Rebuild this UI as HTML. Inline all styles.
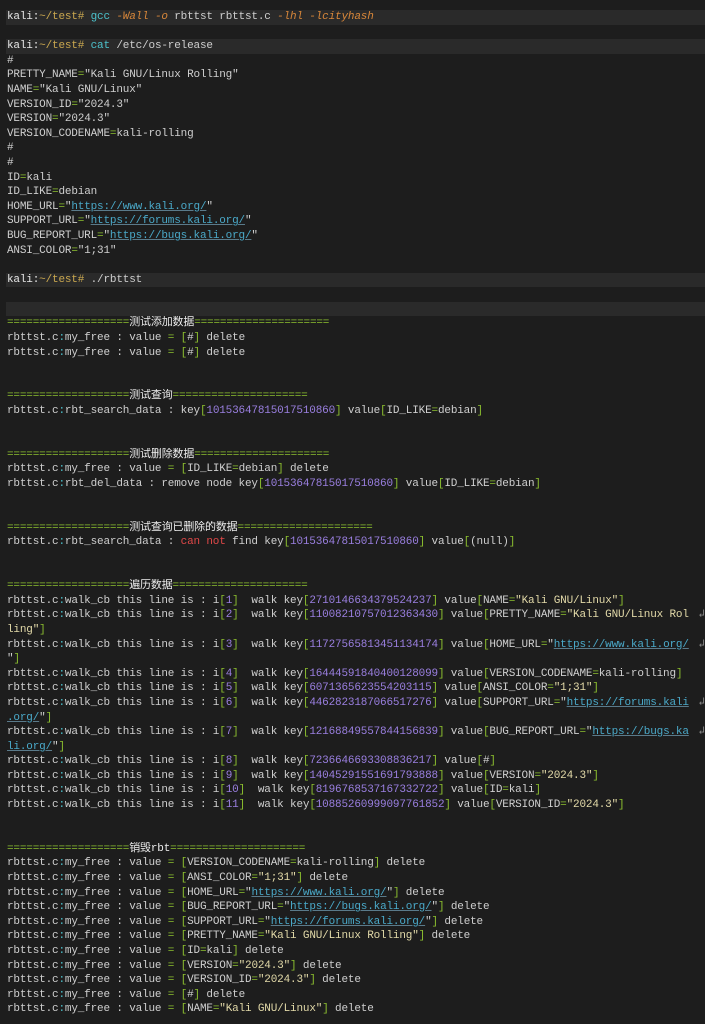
<!DOCTYPE html>
<html><head><meta charset="utf-8"><style>
html,body{margin:0;padding:0;background:#1d1d1d;width:705px;height:1024px;overflow:hidden}
#t{position:absolute;top:10px;left:0;width:705px;font-family:"Liberation Mono","Noto Sans CJK SC",monospace;font-size:11px;letter-spacing:-0.17px;line-height:14.6px;color:#cfcfcf}
.l{white-space:pre;height:14.6px;padding-left:7px;overflow:hidden;position:relative}
.b{background:#2a2a2a;margin-left:6px;padding-left:1px}
.p{color:#e6e6e6}.t{color:#c9a74f}.c{color:#4cc2cc}.f{color:#d8873a;font-style:italic}
.g{color:#8cbf2f}.n{color:#9a7fe0}.u{color:#4aa9c9;text-decoration:underline;text-decoration-color:#5a7a8a}
.r{color:#e04848}.w{color:#ececec}.k{color:#4cc2cc}.s{color:#e2d9a8}
.m{position:absolute;right:0;top:0;color:#888;background:#1d1d1d;padding-left:1px}
</style></head><body><div id="t">
<div class="l b"><span class="p">kali:</span><span class="t">~/test#</span> <span class="c">gcc</span> <span class="f">-Wall -o</span> rbttst rbttst.c <span class="f">-lhl -lcityhash</span></div>
<div class="l"></div>
<div class="l b"><span class="p">kali:</span><span class="t">~/test#</span> <span class="c">cat</span> /etc/os-release</div>
<div class="l">#</div>
<div class="l">PRETTY_NAME<span class="g">=</span>"Kali GNU/Linux Rolling"</div>
<div class="l">NAME<span class="g">=</span>"Kali GNU/Linux"</div>
<div class="l">VERSION_ID<span class="g">=</span>"2024.3"</div>
<div class="l">VERSION<span class="g">=</span>"2024.3"</div>
<div class="l">VERSION_CODENAME<span class="g">=</span>kali-rolling</div>
<div class="l">#</div>
<div class="l">#</div>
<div class="l">ID<span class="g">=</span>kali</div>
<div class="l">ID_LIKE<span class="g">=</span>debian</div>
<div class="l">HOME_URL<span class="g">=</span>"<span class="u">https://www.kali.org/</span>"</div>
<div class="l">SUPPORT_URL<span class="g">=</span>"<span class="u">https://forums.kali.org/</span>"</div>
<div class="l">BUG_REPORT_URL<span class="g">=</span>"<span class="u">https://bugs.kali.org/</span>"</div>
<div class="l">ANSI_COLOR<span class="g">=</span>"1;31"</div>
<div class="l"></div>
<div class="l b"><span class="p">kali:</span><span class="t">~/test#</span> ./rbttst</div>
<div class="l"></div>
<div class="l b"></div>
<div class="l"><span class="g">===================</span><span class="w">测试添加数据</span><span class="g">=====================</span></div>
<div class="l">rbttst.c<span class="k">:</span>my_free : value <span class="g">=</span> <span class="g">[</span>#<span class="g">]</span> delete</div>
<div class="l">rbttst.c<span class="k">:</span>my_free : value <span class="g">=</span> <span class="g">[</span>#<span class="g">]</span> delete</div>
<div class="l"></div>
<div class="l"></div>
<div class="l"><span class="g">===================</span><span class="w">测试查询</span><span class="g">=====================</span></div>
<div class="l">rbttst.c<span class="k">:</span>rbt_search_data : key<span class="g">[</span><span class="n">10153647815017510860</span><span class="g">]</span> value<span class="g">[</span>ID_LIKE<span class="g">=</span>debian<span class="g">]</span></div>
<div class="l"></div>
<div class="l"></div>
<div class="l"><span class="g">===================</span><span class="w">测试删除数据</span><span class="g">=====================</span></div>
<div class="l">rbttst.c<span class="k">:</span>my_free : value <span class="g">=</span> <span class="g">[</span>ID_LIKE<span class="g">=</span>debian<span class="g">]</span> delete</div>
<div class="l">rbttst.c<span class="k">:</span>rbt_del_data : remove node key<span class="g">[</span><span class="n">10153647815017510860</span><span class="g">]</span> value<span class="g">[</span>ID_LIKE<span class="g">=</span>debian<span class="g">]</span></div>
<div class="l"></div>
<div class="l"></div>
<div class="l"><span class="g">===================</span><span class="w">测试查询已删除的数据</span><span class="g">=====================</span></div>
<div class="l">rbttst.c<span class="k">:</span>rbt_search_data : <span class="r">can not</span> find key<span class="g">[</span><span class="n">10153647815017510860</span><span class="g">]</span> value<span class="g">[</span>(null)<span class="g">]</span></div>
<div class="l"></div>
<div class="l"></div>
<div class="l"><span class="g">===================</span><span class="w">遍历数据</span><span class="g">=====================</span></div>
<div class="l">rbttst.c<span class="k">:</span>walk_cb this line is : i<span class="g">[</span><span class="n">1</span><span class="g">]</span>  walk key<span class="g">[</span><span class="n">2710146634379524237</span><span class="g">]</span> value<span class="g">[</span>NAME<span class="g">=</span><span class="s">"Kali GNU/Linux"</span><span class="g">]</span></div>
<div class="l">rbttst.c<span class="k">:</span>walk_cb this line is : i<span class="g">[</span><span class="n">2</span><span class="g">]</span>  walk key<span class="g">[</span><span class="n">11008210757012363430</span><span class="g">]</span> value<span class="g">[</span>PRETTY_NAME<span class="g">=</span><span class="s">"Kali GNU/Linux Rol</span><span class="m">↲</span></div>
<div class="l"><span class="s">ling"</span><span class="g">]</span></div>
<div class="l">rbttst.c<span class="k">:</span>walk_cb this line is : i<span class="g">[</span><span class="n">3</span><span class="g">]</span>  walk key<span class="g">[</span><span class="n">11727565813451134174</span><span class="g">]</span> value<span class="g">[</span>HOME_URL<span class="g">=</span>"<span class="u">https://www.kali.org/</span><span class="m">↲</span></div>
<div class="l">"<span class="g">]</span></div>
<div class="l">rbttst.c<span class="k">:</span>walk_cb this line is : i<span class="g">[</span><span class="n">4</span><span class="g">]</span>  walk key<span class="g">[</span><span class="n">16444591840400128099</span><span class="g">]</span> value<span class="g">[</span>VERSION_CODENAME<span class="g">=</span>kali-rolling<span class="g">]</span></div>
<div class="l">rbttst.c<span class="k">:</span>walk_cb this line is : i<span class="g">[</span><span class="n">5</span><span class="g">]</span>  walk key<span class="g">[</span><span class="n">6071365623554203115</span><span class="g">]</span> value<span class="g">[</span>ANSI_COLOR<span class="g">=</span><span class="s">"1;31"</span><span class="g">]</span></div>
<div class="l">rbttst.c<span class="k">:</span>walk_cb this line is : i<span class="g">[</span><span class="n">6</span><span class="g">]</span>  walk key<span class="g">[</span><span class="n">4462823187066517276</span><span class="g">]</span> value<span class="g">[</span>SUPPORT_URL<span class="g">=</span>"<span class="u">https://forums.kali</span><span class="m">↲</span></div>
<div class="l"><span class="u">.org/</span>"<span class="g">]</span></div>
<div class="l">rbttst.c<span class="k">:</span>walk_cb this line is : i<span class="g">[</span><span class="n">7</span><span class="g">]</span>  walk key<span class="g">[</span><span class="n">12168849557844156839</span><span class="g">]</span> value<span class="g">[</span>BUG_REPORT_URL<span class="g">=</span>"<span class="u">https://bugs.ka</span><span class="m">↲</span></div>
<div class="l"><span class="u">li.org/</span>"<span class="g">]</span></div>
<div class="l">rbttst.c<span class="k">:</span>walk_cb this line is : i<span class="g">[</span><span class="n">8</span><span class="g">]</span>  walk key<span class="g">[</span><span class="n">7236646693308836217</span><span class="g">]</span> value<span class="g">[</span>#<span class="g">]</span></div>
<div class="l">rbttst.c<span class="k">:</span>walk_cb this line is : i<span class="g">[</span><span class="n">9</span><span class="g">]</span>  walk key<span class="g">[</span><span class="n">14045291551691793888</span><span class="g">]</span> value<span class="g">[</span>VERSION<span class="g">=</span><span class="s">"2024.3"</span><span class="g">]</span></div>
<div class="l">rbttst.c<span class="k">:</span>walk_cb this line is : i<span class="g">[</span><span class="n">10</span><span class="g">]</span>  walk key<span class="g">[</span><span class="n">8196768537167332722</span><span class="g">]</span> value<span class="g">[</span>ID<span class="g">=</span>kali<span class="g">]</span></div>
<div class="l">rbttst.c<span class="k">:</span>walk_cb this line is : i<span class="g">[</span><span class="n">11</span><span class="g">]</span>  walk key<span class="g">[</span><span class="n">10885260999097761852</span><span class="g">]</span> value<span class="g">[</span>VERSION_ID<span class="g">=</span><span class="s">"2024.3"</span><span class="g">]</span></div>
<div class="l"></div>
<div class="l"></div>
<div class="l"><span class="g">===================</span><span class="w">销毁rbt</span><span class="g">=====================</span></div>
<div class="l">rbttst.c<span class="k">:</span>my_free : value <span class="g">=</span> <span class="g">[</span>VERSION_CODENAME<span class="g">=</span>kali-rolling<span class="g">]</span> delete</div>
<div class="l">rbttst.c<span class="k">:</span>my_free : value <span class="g">=</span> <span class="g">[</span>ANSI_COLOR<span class="g">=</span><span class="s">"1;31"</span><span class="g">]</span> delete</div>
<div class="l">rbttst.c<span class="k">:</span>my_free : value <span class="g">=</span> <span class="g">[</span>HOME_URL<span class="g">=</span>"<span class="u">https://www.kali.org/</span>"<span class="g">]</span> delete</div>
<div class="l">rbttst.c<span class="k">:</span>my_free : value <span class="g">=</span> <span class="g">[</span>BUG_REPORT_URL<span class="g">=</span>"<span class="u">https://bugs.kali.org/</span>"<span class="g">]</span> delete</div>
<div class="l">rbttst.c<span class="k">:</span>my_free : value <span class="g">=</span> <span class="g">[</span>SUPPORT_URL<span class="g">=</span>"<span class="u">https://forums.kali.org/</span>"<span class="g">]</span> delete</div>
<div class="l">rbttst.c<span class="k">:</span>my_free : value <span class="g">=</span> <span class="g">[</span>PRETTY_NAME<span class="g">=</span><span class="s">"Kali GNU/Linux Rolling"</span><span class="g">]</span> delete</div>
<div class="l">rbttst.c<span class="k">:</span>my_free : value <span class="g">=</span> <span class="g">[</span>ID<span class="g">=</span>kali<span class="g">]</span> delete</div>
<div class="l">rbttst.c<span class="k">:</span>my_free : value <span class="g">=</span> <span class="g">[</span>VERSION<span class="g">=</span><span class="s">"2024.3"</span><span class="g">]</span> delete</div>
<div class="l">rbttst.c<span class="k">:</span>my_free : value <span class="g">=</span> <span class="g">[</span>VERSION_ID<span class="g">=</span><span class="s">"2024.3"</span><span class="g">]</span> delete</div>
<div class="l">rbttst.c<span class="k">:</span>my_free : value <span class="g">=</span> <span class="g">[</span>#<span class="g">]</span> delete</div>
<div class="l">rbttst.c<span class="k">:</span>my_free : value <span class="g">=</span> <span class="g">[</span>NAME<span class="g">=</span><span class="s">"Kali GNU/Linux"</span><span class="g">]</span> delete</div>
</div></body></html>
